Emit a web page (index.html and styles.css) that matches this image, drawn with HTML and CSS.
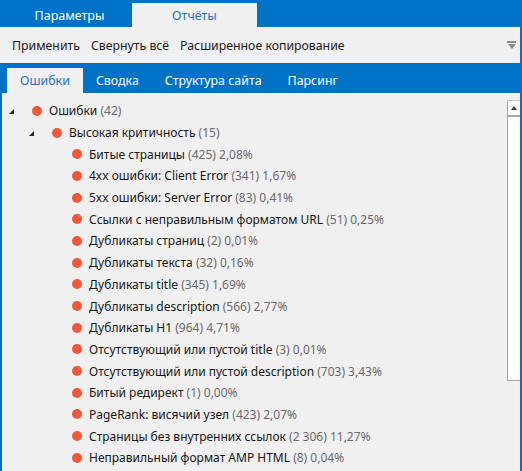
FILE: index.html
```html
<!DOCTYPE html>
<html lang="ru">
<head>
<meta charset="utf-8">
<link rel="stylesheet" href="styles.css">
</head>
<body>
<div class="app">
  <div class="topbar">
    <div class="toptab">Параметры</div>
    <div class="toptab active">Отчёты</div>
  </div>
  <div class="toolbar">
    <span class="tool">Применить</span>
    <span class="tool">Свернуть всё</span>
    <span class="tool">Расширенное копирование</span>
    <span class="overflow"><span class="ov-bar"></span><span class="ov-tri"></span></span>
  </div>
  <div class="subtabs">
    <div class="subtab active">Ошибки</div>
    <div class="subtab">Сводка</div>
    <div class="subtab">Структура сайта</div>
    <div class="subtab">Парсинг</div>
  </div>
  <div class="content">
    <div class="tree">
      <div class="row l0"><span class="exp"></span><span class="dot"></span><span class="label">Ошибки <span class="num">(42)</span></span></div>
      <div class="row l1"><span class="exp"></span><span class="dot"></span><span class="label">Высокая критичность <span class="num">(15)</span></span></div>
      <div class="row l2"><span class="noexp"></span><span class="dot"></span><span class="label">Битые страницы <span class="num">(425) 2,08%</span></span></div>
      <div class="row l2"><span class="noexp"></span><span class="dot"></span><span class="label">4xx ошибки: Client Error <span class="num">(341) 1,67%</span></span></div>
      <div class="row l2"><span class="noexp"></span><span class="dot"></span><span class="label">5xx ошибки: Server Error <span class="num">(83) 0,41%</span></span></div>
      <div class="row l2"><span class="noexp"></span><span class="dot"></span><span class="label">Ссылки с неправильным форматом URL <span class="num">(51) 0,25%</span></span></div>
      <div class="row l2"><span class="noexp"></span><span class="dot"></span><span class="label">Дубликаты страниц <span class="num">(2) 0,01%</span></span></div>
      <div class="row l2"><span class="noexp"></span><span class="dot"></span><span class="label">Дубликаты текста <span class="num">(32) 0,16%</span></span></div>
      <div class="row l2"><span class="noexp"></span><span class="dot"></span><span class="label">Дубликаты title <span class="num">(345) 1,69%</span></span></div>
      <div class="row l2"><span class="noexp"></span><span class="dot"></span><span class="label">Дубликаты description <span class="num">(566) 2,77%</span></span></div>
      <div class="row l2"><span class="noexp"></span><span class="dot"></span><span class="label">Дубликаты H1 <span class="num">(964) 4,71%</span></span></div>
      <div class="row l2"><span class="noexp"></span><span class="dot"></span><span class="label">Отсутствующий или пустой title <span class="num">(3) 0,01%</span></span></div>
      <div class="row l2"><span class="noexp"></span><span class="dot"></span><span class="label">Отсутствующий или пустой description <span class="num">(703) 3,43%</span></span></div>
      <div class="row l2"><span class="noexp"></span><span class="dot"></span><span class="label">Битый редирект <span class="num">(1) 0,00%</span></span></div>
      <div class="row l2"><span class="noexp"></span><span class="dot"></span><span class="label">PageRank: висячий узел <span class="num">(423) 2,07%</span></span></div>
      <div class="row l2"><span class="noexp"></span><span class="dot"></span><span class="label">Страницы без внутренних ссылок <span class="num">(2 306) 11,27%</span></span></div>
      <div class="row l2"><span class="noexp"></span><span class="dot"></span><span class="label">Неправильный формат AMP HTML <span class="num">(8) 0,04%</span></span></div>
    </div>
    <div class="scrollbar">
      <div class="sb-up"><span class="sb-tri"></span></div>
      <div class="sb-thumb"></div>
    </div>
  </div>
</div>
</body>
</html>
```
FILE: styles.css
```css
html, body {
  margin: 0;
  padding: 0;
  height: 100%;
  overflow: hidden;
}
body {
  background: #0072c6;
  font-family: "Noto Sans", "Open Sans", sans-serif;
}
.app {
  display: flex;
  flex-direction: column;
  height: 100%;
}
.topbar {
  height: 27px;
  display: flex;
  align-items: flex-end;
  padding-left: 7px;
  background: #0072c6;
}
.toptab {
  width: 125px;
  height: 24px;
  display: flex;
  align-items: center;
  justify-content: center;
  color: #ffffff;
  font-size: 12.5px;
}
.toptab.active {
  background: #f0f0f0;
  color: #2a6fc4;
}
.toolbar {
  height: 36px;
  margin-right: 2px;
  background: #f0f0f0;
  display: flex;
  align-items: center;
  padding-left: 12px;
  gap: 11px;
  font-size: 12.3px;
  color: #1a1a1a;
}
.overflow {
  margin-left: auto;
  margin-right: 4px;
  width: 9px;
  display: flex;
  flex-direction: column;
  align-items: center;
  gap: 1px;
}
.ov-bar {
  width: 9px;
  height: 2px;
  background: #8a8a8a;
}
.ov-tri {
  width: 0;
  height: 0;
  border-left: 4.5px solid transparent;
  border-right: 4.5px solid transparent;
  border-top: 5px solid #8a8a8a;
}
.subtabs {
  height: 30px;
  display: flex;
  align-items: flex-end;
  padding-left: 7px;
  background: #0072c6;
}
.subtab {
  height: 25px;
  padding: 0 13px;
  display: flex;
  align-items: center;
  color: #ffffff;
  font-size: 12.4px;
}
.subtab.active {
  background: #f0f0f0;
  color: #2a6fc4;
}
.content {
  flex: 1;
  display: flex;
  background: #f0f0f0;
  border-left: 2px solid #0072c6;
  border-right: 2px solid #0072c6;
  min-height: 0;
}
.tree {
  flex: 1;
  padding-top: 7px;
  font-size: 12px;
  color: #161616;
}
.row {
  height: 21.7px;
  display: flex;
  align-items: center;
  white-space: nowrap;
}
.row.l0 { padding-left: 7px; }
.row.l1 { padding-left: 27px; }
.row.l2 { padding-left: 47px; }
.exp, .noexp {
  width: 5px;
  height: 5px;
  flex: none;
  position: relative;
  top: 1px;
}
.exp {
  width: 0;
  height: 0;
  border-left: 5px solid transparent;
  border-bottom: 5px solid #262626;
}
.dot {
  width: 10px;
  height: 10px;
  border-radius: 50%;
  background: #f0583a;
  margin-left: 18px;
  flex: none;
}
.label {
  margin-left: 7px;
}
.num {
  color: #6a6a6a;
}
.scrollbar {
  width: 13px;
  margin-top: 7px;
  display: flex;
  flex-direction: column;
  flex: none;
}
.sb-up {
  height: 14px;
  background: #ffffff;
  border-left: 1px solid #a6a6a6;
  border-top: 1px solid #c8c8c8;
  display: flex;
  justify-content: center;
  align-items: center;
}
.sb-tri {
  width: 0;
  height: 0;
  border-left: 3.5px solid transparent;
  border-right: 3.5px solid transparent;
  border-bottom: 4px solid #3a3a3a;
}
.sb-thumb {
  height: 263px;
  background: #ffffff;
  border-left: 1px solid #a6a6a6;
  border-top: 2px solid #a6a6a6;
  border-bottom: 1px solid #a6a6a6;
}
```
